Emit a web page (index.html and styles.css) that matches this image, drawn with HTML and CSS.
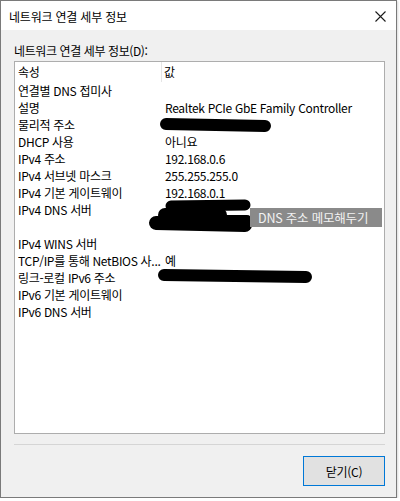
FILE: index.html
```html
<!DOCTYPE html>
<html lang="ko">
<head>
    <meta charset="UTF-8">
    <title>네트워크 연결 세부 정보</title>
    <link rel="stylesheet" href="styles.css">
</head>
<body>
    <div class="window">
        <!-- 타이틀 바 -->
        <div class="titlebar">
            <span class="title">네트워크 연결 세부 정보</span>
            <svg class="close" width="11" height="11" viewBox="0 0 11 11">
                <path d="M0.5 0.5 L10.5 10.5 M10.5 0.5 L0.5 10.5" stroke="#1a1a1a" stroke-width="1.1" fill="none"/>
            </svg>
        </div>

        <div class="content">
            <div class="label">네트워크 연결 세부 정보(D):</div>

            <div class="listview">
                <div class="row header">
                    <div class="cell name">속성</div>
                    <div class="cell value">값</div>
                </div>
                <div class="row"><div class="cell name">연결별 DNS 접미사</div><div class="cell value"></div></div>
                <div class="row"><div class="cell name">설명</div><div class="cell value">Realtek PCIe GbE Family Controller</div></div>
                <div class="row"><div class="cell name">물리적 주소</div><div class="cell value"></div></div>
                <div class="row"><div class="cell name">DHCP 사용</div><div class="cell value">아니요</div></div>
                <div class="row"><div class="cell name">IPv4 주소</div><div class="cell value">192.168.0.6</div></div>
                <div class="row"><div class="cell name">IPv4 서브넷 마스크</div><div class="cell value">255.255.255.0</div></div>
                <div class="row"><div class="cell name">IPv4 기본 게이트웨이</div><div class="cell value">192.168.0.1</div></div>
                <div class="row double"><div class="cell name">IPv4 DNS 서버</div><div class="cell value"></div></div>
                <div class="row"><div class="cell name">IPv4 WINS 서버</div><div class="cell value"></div></div>
                <div class="row"><div class="cell name">TCP/IP를 통해 NetBIOS 사...</div><div class="cell value">예</div></div>
                <div class="row"><div class="cell name">링크-로컬 IPv6 주소</div><div class="cell value"></div></div>
                <div class="row"><div class="cell name">IPv6 기본 게이트웨이</div><div class="cell value"></div></div>
                <div class="row"><div class="cell name">IPv6 DNS 서버</div><div class="cell value"></div></div>

                <!-- 가려진 주소 -->
                <svg class="redact" width="370" height="371" viewBox="0 0 370 371">
                    <g stroke="#000" stroke-linecap="round" fill="none">
                        <path d="M151 62 L250 64" stroke-width="12"/>
                        <path d="M156 144 L230 143" stroke-width="11"/>
                        <path d="M150 153 L205 153" stroke-width="14"/>
                        <path d="M141 161 L230 163" stroke-width="14"/>
                        <path d="M200 158 L232 158" stroke-width="10"/>
                        <path d="M149 213 L291 215" stroke-width="12"/>
                    </g>
                </svg>

                <div class="tooltip">DNS 주소 메모해두기</div>
            </div>

            <div class="separator"></div>

            <div class="footer">
                <button class="btn">닫기(C)</button>
            </div>
        </div>
    </div>
</body>
</html>
```

FILE: styles.css
```css
body {
    margin: 0;
    background: #ffffff;
    font-family: "Noto Sans CJK KR", "Noto Sans", sans-serif;
    font-size: 12px;
    color: #000;
}

.window {
    width: 397px;
    height: 498px;
    box-sizing: border-box;
    border: 1px solid #7a7a7a;
    background: #f0f0f0;
    display: flex;
    flex-direction: column;
    box-shadow: 1px 1px 2px rgba(0,0,0,0.15);
}

/* 타이틀 바 */
.titlebar {
    height: 29px;
    background: #ffffff;
    display: flex;
    align-items: center;
    justify-content: space-between;
    padding: 0 10px 0 8px;
}

.title {
    letter-spacing: -0.2px;
    padding-top: 1px;
}

.close {
    display: block;
    margin-top: 2px;
}

.content {
    flex: 1;
    padding: 0 11px 0 13px;
    display: flex;
    flex-direction: column;
}

.label {
    margin-top: 13px;
    height: 18px;
    line-height: 16px;
    letter-spacing: -0.4px;
}

/* 리스트뷰 */
.listview {
    position: relative;
    height: 373px;
    box-sizing: border-box;
    border: 1px solid #adadad;
    background: #ffffff;
}

.row {
    display: grid;
    grid-template-columns: 147px 1fr;
    height: 17px;
    line-height: 17px;
}

.row.header {
    height: 20px;
    line-height: 20px;
}

.row.double {
    height: 34px;
}

.cell {
    padding-left: 3px;
    white-space: nowrap;
    overflow: hidden;
    letter-spacing: -0.3px;
}

.header .name {
    border-right: 1px solid #e5e5e5;
}

.header .value {
    padding-left: 2px;
}

.redact {
    position: absolute;
    left: 0;
    top: 0;
}

.tooltip {
    position: absolute;
    left: 235px;
    top: 146px;
    width: 132px;
    height: 19px;
    box-sizing: border-box;
    padding-left: 8px;
    background: #8a8a8a;
    color: #f2f2f2;
    font-size: 12.5px;
    line-height: 19px;
    letter-spacing: -0.2px;
    white-space: nowrap;
}

.separator {
    margin-top: 10px;
    height: 1px;
    background: #d5d5d5;
}

.footer {
    display: flex;
    justify-content: flex-end;
    padding-top: 11px;
}

.btn {
    width: 82px;
    height: 30px;
    background: #e1e1e1;
    border: 1px solid #0078d7;
    font-family: inherit;
    font-size: 12px;
    color: #000;
    letter-spacing: -0.3px;
    padding: 0;
}
```
